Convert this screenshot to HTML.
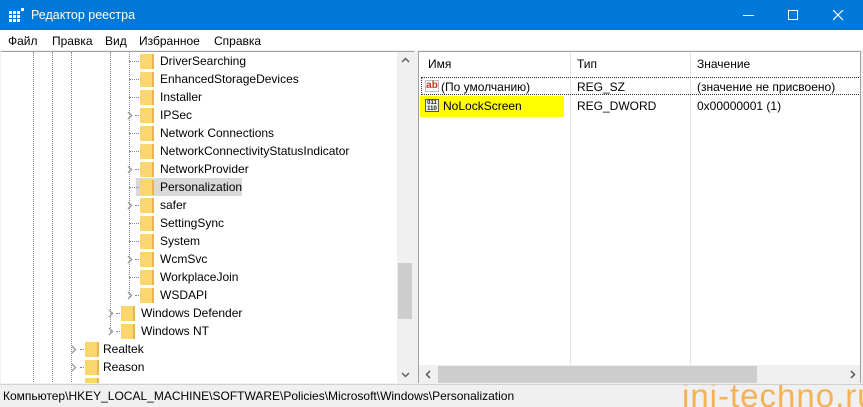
<!DOCTYPE html>
<html><head><meta charset="utf-8"><style>
*{margin:0;padding:0;box-sizing:border-box}
html,body{width:863px;height:407px;overflow:hidden}
body{background:#f0f0f0;font-family:"Liberation Sans",sans-serif;font-size:12px;color:#000;position:relative}
.abs{position:absolute}
.title{left:0;top:0;width:863px;height:30px;background:#0078d7;color:#fff;font-size:12.5px}
.menu{left:0;top:30px;width:863px;height:20px;background:#fff}
.menu span{position:absolute;top:4px}
.left{left:1px;top:51px;width:413px;height:332px;background:#fff;overflow:hidden;border-top:1px solid #a0a0a0}
.row{position:absolute;height:18px;line-height:18px;white-space:nowrap}
.fold{position:absolute;width:14px;height:15px;background:#fbd66f;border-right:2px solid #e8b64a;top:2px}
.arr{position:absolute;top:5px}
.vl{position:absolute;width:0;border-left:1px dotted #888}
.hl{position:absolute;height:0;border-top:1px dotted #888;top:9px}
.right{left:418px;top:51px;width:443px;height:332px;background:#fff;border-top:1px solid #a0a0a0;border-left:1px solid #a0a0a0;border-right:1px solid #a0a0a0;overflow:hidden}
.status{left:0;top:384px;width:863px;height:23px;background:#f0f0f0;border-top:1px solid #d0d0d0;overflow:hidden;white-space:nowrap}
</style></head><body>
<div class="abs title">
 <svg class="abs" style="left:9px;top:8px" width="16" height="14"><g fill="#fff"><rect x="0" y="3" width="3" height="3"/><rect x="4" y="3" width="3" height="3"/><rect x="8" y="3" width="3" height="3"/><rect x="0" y="7" width="3" height="3"/><rect x="4" y="7" width="3" height="3"/><rect x="8" y="7" width="3" height="3"/><rect x="0" y="11" width="3" height="3"/><rect x="4" y="11" width="3" height="3"/><rect x="8" y="11" width="3" height="3"/><rect x="12" y="0" width="3" height="3"/></g></svg>
 <span class="abs" style="left:31px;top:8px">Редактор реестра</span>
 <div class="abs" style="left:743px;top:15px;width:11px;height:1px;background:#fff"></div>
 <div class="abs" style="left:788px;top:10px;width:10px;height:10px;border:1px solid #fff"></div>
 <svg class="abs" style="left:833px;top:10px" width="11" height="11"><path d="M0 0L10 10M10 0L0 10" stroke="#fff" stroke-width="1.2"/></svg>
</div>
<div class="abs menu">
 <span style="left:8px">Файл</span><span style="left:52px">Правка</span><span style="left:105px">Вид</span><span style="left:139px">Избранное</span><span style="left:214px">Справка</span>
</div>
<div class="abs left">
 <div class="vl" style="left:32px;top:0;height:332px"></div>
 <div class="vl" style="left:51px;top:0;height:332px"></div>
 <div class="vl" style="left:70px;top:0;height:332px"></div>
 <div class="vl" style="left:109px;top:0;height:280px"></div>
 <div class="vl" style="left:128px;top:0;height:245px"></div>
 <div id="tree"></div>
 <div class="abs" style="left:396px;top:0;width:17px;height:332px;background:#f0f0f0"></div>
 <div class="abs" style="left:397px;top:211px;width:14px;height:56px;background:#cdcdcd"></div>
 <svg class="abs" style="left:400px;top:5px" width="9" height="6"><path d="M1 5L4.5 1.5L8 5" stroke="#606060" stroke-width="1.5" fill="none"/></svg>
 <svg class="abs" style="left:400px;top:320px" width="9" height="6"><path d="M1 1L4.5 4.5L8 1" stroke="#606060" stroke-width="1.5" fill="none"/></svg>
</div>
<div class="abs right">
 <div class="abs" style="left:0;top:0;width:443px;height:22px;background:#fff"></div>
 <span class="abs" style="left:9px;top:5px">Имя</span>
 <div class="abs" style="left:151px;top:0;width:1px;height:313px;background:#e5e5e5"></div>
 <span class="abs" style="left:158px;top:5px">Тип</span>
 <div class="abs" style="left:271px;top:0;width:1px;height:313px;background:#e5e5e5"></div>
 <span class="abs" style="left:278px;top:5px">Значение</span>
 <div class="abs" style="left:2px;top:25px;width:440px;height:18px;border:1px dotted #333"></div>
 <div class="abs" style="left:6px;top:28px;width:14px;height:12px;border:1px solid #bbb;background:#fff;color:#d03020;font-size:10px;font-weight:bold;line-height:9px;text-align:center">ab</div>
 <span class="abs" style="left:22px;top:28px">(По умолчанию)</span>
 <span class="abs" style="left:158px;top:28px">REG_SZ</span>
 <span class="abs" style="left:278px;top:28px">(значение не присвоено)</span>
 <div class="abs" style="left:1px;top:44px;width:144px;height:21px;background:#ffff00"></div>
 <div class="abs" style="left:6px;top:47px;width:14px;height:13px;border:1px solid #555;background:#eee;font-size:6px;line-height:6px;font-weight:bold;text-align:center;color:#222">011<br>110</div>
 <span class="abs" style="left:24px;top:47px">NoLockScreen</span>
 <span class="abs" style="left:158px;top:47px">REG_DWORD</span>
 <span class="abs" style="left:278px;top:47px">0x00000001 (1)</span>
 <div class="abs" style="left:0;top:313px;width:443px;height:19px;background:#f0f0f0"></div>
 <div class="abs" style="left:19px;top:314px;width:319px;height:17px;background:#cdcdcd"></div>
 <svg class="abs" style="left:6px;top:318px" width="6" height="9"><path d="M5 1L1.5 4.5L5 8" stroke="#555" stroke-width="1.5" fill="none"/></svg>
 <svg class="abs" style="left:431px;top:318px" width="6" height="9"><path d="M1 1L4.5 4.5L1 8" stroke="#555" stroke-width="1.5" fill="none"/></svg>
</div>
<div class="abs status"><span class="abs" style="left:3px;top:4px">Компьютер\HKEY_LOCAL_MACHINE\SOFTWARE\Policies\Microsoft\Windows\Personalization</span>
<span class="abs" style="left:682px;top:-8px;font-size:33px;color:#f5a83c;opacity:.85;letter-spacing:1px;white-space:nowrap">ini-techno.ru</span></div>
<script>
var items=[["DriverSearching",3,0],["EnhancedStorageDevices",3,0],["Installer",3,0],["IPSec",3,1],["Network Connections",3,0],["NetworkConnectivityStatusIndicator",3,0],["NetworkProvider",3,1],["Personalization",3,0],["safer",3,1],["SettingSync",3,0],["System",3,0],["WcmSvc",3,1],["WorkplaceJoin",3,0],["WSDAPI",3,1],["Windows Defender",2,1],["Windows NT",2,1],["Realtek",1,1],["Reason",1,1],["",1,0]];
var X={3:[125,139,159],2:[106,120,140],1:[69,84,102]};var h="";
items.forEach(function(it,i){var t=i*18,x=X[it[1]];
h+='<div class="row" style="top:'+t+'px;left:0;width:396px">';
if(i==7)h+='<div style="position:absolute;left:'+(x[1]-4)+'px;top:0;width:106px;height:18px;background:#d9d9d9"></div>';
if(it[2])h+='<svg class="arr" style="left:'+(x[0]+1)+'px" width="6" height="9"><path d="M1 1L4.5 4.5L1 8" stroke="#a0a0a0" stroke-width="1.5" fill="none"/></svg>';
h+='<div class="hl" style="left:'+(it[2]?x[1]-5:x[1]-11)+'px;width:'+(it[2]?4:10)+'px"></div>';
h+='<div class="fold" style="left:'+x[1]+'px"></div>';
h+='<span style="position:absolute;left:'+x[2]+'px">'+it[0]+'</span></div>';});
document.getElementById("tree").innerHTML=h;
</script>
</body></html>
